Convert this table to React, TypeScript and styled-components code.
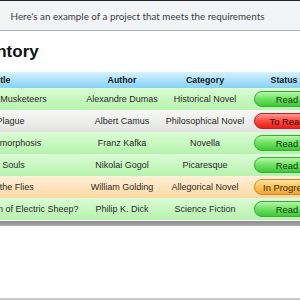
import React from "react";
import styled, { createGlobalStyle } from "styled-components";

const Global = createGlobalStyle`
  html, body { margin: 0; padding: 0; background: #ffffff; overflow: hidden; }
  body { width: 300px; height: 300px; }
`;

const Page = styled.div`
  width: 300px;
  height: 300px;
  display: flex;
  flex-direction: column;
  overflow: hidden;
  border-bottom: 2px solid #c8c8cc;
  box-sizing: border-box;
`;

const TopStrip = styled.div`
  height: 1px;
  background: #20222c;
  flex: none;
`;

const Banner = styled.div`
  height: 29px;
  flex: none;
  background: #f3f4f6;
  border-bottom: 1px solid #adaeb6;
  display: flex;
  align-items: center;
  justify-content: center;
  padding-right: 25px;
  font-family: Lato, "Open Sans", sans-serif;
  font-size: 9.8px;
  color: #3a3d44;
`;

const Main = styled.div`
  margin-left: -82px;
  width: 405px;
  display: flex;
  flex-direction: column;
`;

const Heading = styled.h1`
  margin: 11px 0 10px -3px;
  height: 20px;
  line-height: 20px;
  font-family: "Liberation Sans", Arial, sans-serif;
  font-weight: 700;
  font-size: 17px;
  color: #111;
`;

const Table = styled.table`
  border-collapse: collapse;
  table-layout: fixed;
  width: 405px;
  font-family: "Liberation Sans", Arial, sans-serif;
  font-size: 9px;
  color: #2a2a2a;
`;

const HeadRow = styled.tr`
  height: 16px;
  background: linear-gradient(to bottom, #d6f2fd 0%, #a9e0fa 55%, #86d2f6 100%);
`;

const Th = styled.th<{ $shift?: number }>`
  font-weight: 700;
  font-size: 8.8px;
  text-align: center;
  padding: 0 ${(p) => p.$shift ?? 0}px 0 0;
  color: #1a1a1a;
`;

const rowBg: Record<string, string> = {
  read: "linear-gradient(to bottom, #dcfcd6 0%, #c4f7bc 60%, #b6f2ad 100%)",
  toread: "linear-gradient(to bottom, #f7f7f5 0%, #ececea 60%, #e2e3e0 100%)",
  progress: "linear-gradient(to bottom, #fff0d8 0%, #ffe2b8 60%, #fcd7a2 100%)",
};

const Row = styled.tr<{ $kind: string }>`
  height: 22px;
  background: ${(p) => rowBg[p.$kind]};
`;

const Td = styled.td`
  text-align: center;
  padding: 0;
  white-space: nowrap;
`;

const badge: Record<string, { bg: string; border: string; color: string }> = {
  read: {
    bg: "linear-gradient(to bottom, #b8f7ac 0%, #6ee25f 50%, #3fc83a 100%)",
    border: "#3aa938",
    color: "#153d12",
  },
  toread: {
    bg: "linear-gradient(to bottom, #ff9a90 0%, #ff4a40 50%, #e8201c 100%)",
    border: "#c8201c",
    color: "#3a0604",
  },
  progress: {
    bg: "linear-gradient(to bottom, #ffe3a0 0%, #fbc25a 50%, #f0a832 100%)",
    border: "#cf8a22",
    color: "#3a2406",
  },
};

const Badge = styled.span<{ $kind: string }>`
  display: inline-flex;
  align-items: center;
  justify-content: center;
  box-sizing: border-box;
  width: 66px;
  height: 16px;
  border-radius: 8px;
  border: 1px solid ${(p) => badge[p.$kind].border};
  background: ${(p) => badge[p.$kind].bg};
  color: ${(p) => badge[p.$kind].color};
  font-size: 9.4px;
  vertical-align: middle;
`;

const FootBar = styled.div`
  height: 5px;
  margin-top: 1px;
  background: linear-gradient(to bottom, #8e8e8e 0%, #9c9c9c 60%, #b4b4b4 100%);
`;

const books = [
  { title: "The Three Musketeers", author: "Alexandre Dumas", category: "Historical Novel", status: "Read", kind: "read" },
  { title: "The Plague", author: "Albert Camus", category: "Philosophical Novel", status: "To Read", kind: "toread" },
  { title: "The Metamorphosis", author: "Franz Kafka", category: "Novella", status: "Read", kind: "read" },
  { title: "Dead Souls", author: "Nikolai Gogol", category: "Picaresque", status: "Read", kind: "read" },
  { title: "Lord of the Flies", author: "William Golding", category: "Allegorical Novel", status: "In Progress", kind: "progress" },
  { title: "Do Androids Dream of Electric Sheep?", author: "Philip K. Dick", category: "Science Fiction", status: "Read", kind: "read" },
];

export default function App() {
  return (
    <>
      <Global />
      <Page>
        <TopStrip />
        <Banner>Here's an example of a project that meets the requirements</Banner>
        <Main>
          <Heading>Book Inventory</Heading>
          <Table>
            <colgroup>
              <col style={{ width: 167 }} />
              <col style={{ width: 74 }} />
              <col style={{ width: 92 }} />
              <col style={{ width: 72 }} />
            </colgroup>
            <thead>
              <HeadRow>
                <Th>Title</Th>
                <Th>Author</Th>
                <Th>Category</Th>
                <Th $shift={6}>Status</Th>
              </HeadRow>
            </thead>
            <tbody>
              {books.map((b) => (
                <Row key={b.title} $kind={b.kind}>
                  <Td>{b.title}</Td>
                  <Td>{b.author}</Td>
                  <Td>{b.category}</Td>
                  <Td>
                    <Badge $kind={b.kind}>{b.status}</Badge>
                  </Td>
                </Row>
              ))}
            </tbody>
          </Table>
          <FootBar />
        </Main>
      </Page>
    </>
  );
}
